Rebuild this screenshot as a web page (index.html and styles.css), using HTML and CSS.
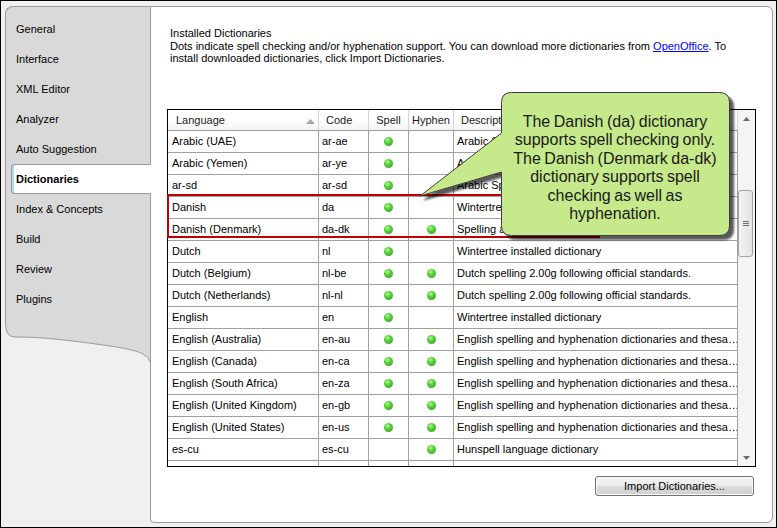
FILE: index.html
```html
<!DOCTYPE html>
<html>
<head>
<meta charset="utf-8">
<link rel="stylesheet" href="styles.css">
</head>
<body>
<div class="window">
  <aside class="sidebar">
    <nav class="nav">
      <div class="item">General</div>
      <div class="item">Interface</div>
      <div class="item">XML Editor</div>
      <div class="item">Analyzer</div>
      <div class="item">Auto Suggestion</div>
      <div class="item active">Dictionaries</div>
      <div class="item">Index &amp; Concepts</div>
      <div class="item">Build</div>
      <div class="item">Review</div>
      <div class="item">Plugins</div>
    </nav>
    <svg class="nav-foot" width="145" height="50" viewBox="0 0 145 50">
      <path d="M0 0 H145 V48 Q144 43 138 40 C133 37.5 125 35 105 32 C60 25.5 35 23 10 23 Q0.5 23 0.5 10 Z" fill="#d9d9d9"/>
      <path d="M0.5 0 V10 Q0.5 23 10 23 C35 23 60 25.5 105 32 C125 35 133 37.5 138 40 Q144 43 145 48" fill="none" stroke="#9b9b9b" stroke-width="1"/>
    </svg>
  </aside>

  <main class="panel">
    <div class="intro">
      <div>Installed Dictionaries</div>
      <div>Dots indicate spell checking and/or hyphenation support. You can download more dictionaries from <a class="link">OpenOffice</a>. To<br>install downloaded dictionaries, click Import Dictionaries.</div>
    </div>

    <div class="table">
      <div class="list">
        <div class="row head">
          <div class="cell c1 hl">Language<svg class="sort" width="9" height="5" viewBox="0 0 9 5"><path d="M0 5 L4.5 0 L9 5 Z" fill="#a6a6a6"/></svg></div>
          <div class="cell c2 hl">Code</div>
          <div class="cell c3 hc">Spell</div>
          <div class="cell c4 hc">Hyphen</div>
          <div class="cell c5 hl">Description</div>
        </div>
        <div class="row"><div class="cell c1">Arabic (UAE)</div><div class="cell c2">ar-ae</div><div class="cell c3 dotcell"><span class="dot"></span></div><div class="cell c4 dotcell"></div><div class="cell c5">Arabic Spelling dictionary</div></div>
        <div class="row"><div class="cell c1">Arabic (Yemen)</div><div class="cell c2">ar-ye</div><div class="cell c3 dotcell"><span class="dot"></span></div><div class="cell c4 dotcell"></div><div class="cell c5">Arabic Spelling dictionary</div></div>
        <div class="row"><div class="cell c1">ar-sd</div><div class="cell c2">ar-sd</div><div class="cell c3 dotcell"><span class="dot"></span></div><div class="cell c4 dotcell"></div><div class="cell c5">Arabic Spelling dictionary</div></div>
        <div class="row"><div class="cell c1">Danish</div><div class="cell c2">da</div><div class="cell c3 dotcell"><span class="dot"></span></div><div class="cell c4 dotcell"></div><div class="cell c5">Wintertree installed dictionary</div></div>
        <div class="row"><div class="cell c1">Danish (Denmark)</div><div class="cell c2">da-dk</div><div class="cell c3 dotcell"><span class="dot"></span></div><div class="cell c4 dotcell"><span class="dot"></span></div><div class="cell c5">Spelling and hyphenation dictionaries</div></div>
        <div class="row"><div class="cell c1">Dutch</div><div class="cell c2">nl</div><div class="cell c3 dotcell"><span class="dot"></span></div><div class="cell c4 dotcell"></div><div class="cell c5">Wintertree installed dictionary</div></div>
        <div class="row"><div class="cell c1">Dutch (Belgium)</div><div class="cell c2">nl-be</div><div class="cell c3 dotcell"><span class="dot"></span></div><div class="cell c4 dotcell"><span class="dot"></span></div><div class="cell c5">Dutch spelling 2.00g following official standards.</div></div>
        <div class="row"><div class="cell c1">Dutch (Netherlands)</div><div class="cell c2">nl-nl</div><div class="cell c3 dotcell"><span class="dot"></span></div><div class="cell c4 dotcell"><span class="dot"></span></div><div class="cell c5">Dutch spelling 2.00g following official standards.</div></div>
        <div class="row"><div class="cell c1">English</div><div class="cell c2">en</div><div class="cell c3 dotcell"><span class="dot"></span></div><div class="cell c4 dotcell"></div><div class="cell c5">Wintertree installed dictionary</div></div>
        <div class="row"><div class="cell c1">English (Australia)</div><div class="cell c2">en-au</div><div class="cell c3 dotcell"><span class="dot"></span></div><div class="cell c4 dotcell"><span class="dot"></span></div><div class="cell c5">English spelling and hyphenation dictionaries and thesa…</div></div>
        <div class="row"><div class="cell c1">English (Canada)</div><div class="cell c2">en-ca</div><div class="cell c3 dotcell"><span class="dot"></span></div><div class="cell c4 dotcell"><span class="dot"></span></div><div class="cell c5">English spelling and hyphenation dictionaries and thesa…</div></div>
        <div class="row"><div class="cell c1">English (South Africa)</div><div class="cell c2">en-za</div><div class="cell c3 dotcell"><span class="dot"></span></div><div class="cell c4 dotcell"><span class="dot"></span></div><div class="cell c5">English spelling and hyphenation dictionaries and thesa…</div></div>
        <div class="row"><div class="cell c1">English (United Kingdom)</div><div class="cell c2">en-gb</div><div class="cell c3 dotcell"><span class="dot"></span></div><div class="cell c4 dotcell"><span class="dot"></span></div><div class="cell c5">English spelling and hyphenation dictionaries and thesa…</div></div>
        <div class="row"><div class="cell c1">English (United States)</div><div class="cell c2">en-us</div><div class="cell c3 dotcell"><span class="dot"></span></div><div class="cell c4 dotcell"><span class="dot"></span></div><div class="cell c5">English spelling and hyphenation dictionaries and thesa…</div></div>
        <div class="row"><div class="cell c1">es-cu</div><div class="cell c2">es-cu</div><div class="cell c3 dotcell"></div><div class="cell c4 dotcell"><span class="dot"></span></div><div class="cell c5">Hunspell language dictionary</div></div>
        <div class="row"><div class="cell c1"></div><div class="cell c2"></div><div class="cell c3"></div><div class="cell c4"></div><div class="cell c5"></div></div>
      </div>
      <div class="scrollbar">
        <div class="arrow"><svg width="7" height="4" viewBox="0 0 7 4"><path d="M0 4 L3.5 0 L7 4 Z" fill="#6a6a6a"/></svg></div>
        <div class="track">
          <div class="thumb"><span></span><span></span><span></span></div>
        </div>
        <div class="arrow"><svg width="7" height="4" viewBox="0 0 7 4"><path d="M0 0 L3.5 4 L7 0 Z" fill="#6a6a6a"/></svg></div>
      </div>
    </div>

    <div class="actions">
      <button class="btn">Import Dictionaries...</button>
    </div>
  </main>

  <div class="highlight"></div>

  <div class="callout">
    <svg class="callout-shape" width="335" height="165" viewBox="0 0 335 165">
      <defs>
        <filter id="sh" x="-10%" y="-10%" width="130%" height="130%">
          <feDropShadow dx="4" dy="4" stdDeviation="1" flood-color="#000" flood-opacity="0.65"/>
        </filter>
      </defs>
      <path d="M101.5 7.5 H309.5 Q319.5 7.5 319.5 17.5 V140.5 Q319.5 150.5 309.5 150.5 H101.5 Q91.5 150.5 91.5 140.5 V87 L10 111 L91.5 48 V17.5 Q91.5 7.5 101.5 7.5 Z" fill="#c5e98b" stroke="#3d3d3d" stroke-width="1" filter="url(#sh)"/>
    </svg>
    <div class="callout-text">The Danish (da) dictionary supports spell checking only. The Danish (Denmark da-dk) dictionary supports spell checking as well as hyphenation.</div>
  </div>
</div>
</body>
</html>
```

FILE: styles.css
```css
* { box-sizing: border-box; }
html, body { margin: 0; padding: 0; }
body {
  width: 777px;
  height: 528px;
  overflow: hidden;
  font-family: "Liberation Sans", Arial, sans-serif;
  font-size: 11px;
  color: #000;
  background: #f0f0f0;
}
.window {
  position: relative;
  width: 777px;
  height: 528px;
  border: 1px solid #000;
  background: #f0f0f0;
  padding: 5px 3px 4px 4px;
  display: flex;
  align-items: flex-start;
}

/* sidebar */
.sidebar { width: 145px; flex: none; display: flex; flex-direction: column; }
.nav {
  background: #d9d9d9;
  border-left: 1px solid #9b9b9b;
  border-top: 1px solid #9b9b9b;
  border-top-left-radius: 8px;
  padding-top: 7px;
}
.item { height: 30px; line-height: 30px; padding-left: 10px; white-space: nowrap; }
.item.active {
  position: relative;
  z-index: 2;
  margin-left: 5px;
  margin-right: -1px;
  background: #fff;
  border: 1px solid #9b9b9b;
  border-right: none;
  border-radius: 3px 0 0 3px;
  box-shadow: inset 2px 0 0 #acd9f8;
  padding-left: 4px;
  line-height: 28px;
  font-weight: bold;
}
.nav-foot { display: block; }

/* panel */
.panel {
  flex: 1;
  height: 517px;
  background: #fff;
  border: 1px solid #9b9b9b;
  border-radius: 0 6px 6px 4px;
  padding: 20px 0 0 16px;
}
.intro { height: 38px; line-height: 12.5px; padding-left: 3px; white-space: nowrap; }
.link { color: #0000ff; text-decoration: underline; }

.table {
  margin-top: 44px;
  width: 589px;
  height: 358px;
  border: 1px solid #000;
  display: flex;
  background: #fff;
}
.list { width: 570px; overflow: hidden; flex: none; }
.row { display: flex; height: 22px; border-bottom: 1px solid #a0a0a0; }
.cell {
  border-right: 1px solid #a0a0a0;
  line-height: 21px;
  padding: 0 3px;
  white-space: nowrap;
  overflow: hidden;
  flex: none;
}
.c1 { width: 151px; padding-left: 4px; }
.c2 { width: 50px; }
.c3 { width: 40px; }
.c4 { width: 45px; }
.c5 { width: 284px; }
.dotcell { display: flex; align-items: center; justify-content: center; padding: 0; }
.dot {
  width: 9px;
  height: 9px;
  border-radius: 50%;
  background: radial-gradient(circle at 40% 32%, #b4f59a 0, #52cf34 40%, #2d9a1c 100%);
}

.row.head {
  height: 21px;
  background: linear-gradient(#ffffff 0%, #ffffff 55%, #f1f2f4 100%);
  border-bottom: 1px solid #a0a0a0;
}
.row.head .cell { line-height: 20px; border-right-color: #d5d5d5; color: #1a1a1a; }
.hl { padding-left: 7px; }
.c1.hl { padding-left: 8px; position: relative; }
.hc { text-align: center; padding: 0; }
.sort { position: absolute; left: 138px; top: 9px; }

.scrollbar {
  width: 17px;
  flex: none;
  display: flex;
  flex-direction: column;
  background: #f4f4f4;
}
.arrow { height: 17px; display: flex; align-items: center; justify-content: center; flex: none; }
.track { flex: 1; }
.thumb {
  margin-top: 63px;
  width: 15px;
  height: 67px;
  border: 1px solid #a3a3a3;
  border-radius: 3px;
  background: linear-gradient(90deg, #f3f3f3, #e4e4e4);
  display: flex;
  flex-direction: column;
  align-items: center;
  justify-content: center;
  gap: 1px;
}
.thumb span { width: 6px; height: 1px; background: #6e6e6e; }

.actions { width: 589px; margin-top: 9px; padding-right: 2px; display: flex; justify-content: flex-end; }
.btn {
  width: 159px;
  height: 20px;
  font-family: "Liberation Sans", Arial, sans-serif;
  font-size: 11px;
  color: #000;
  border: 1px solid #707070;
  border-radius: 3px;
  background: linear-gradient(#f3f3f3 0%, #ebebeb 50%, #dddddd 51%, #d0d0d0 100%);
  box-shadow: inset 0 0 0 1px #fbfbfb;
  padding: 0;
}

/* overlays */
.highlight {
  position: absolute;
  left: 166px;
  top: 193px;
  width: 433px;
  height: 44px;
  border: 2px solid #c00000;
  z-index: 3;
}
.callout {
  position: absolute;
  left: 409px;
  top: 84px;
  width: 335px;
  height: 165px;
  z-index: 4;
}
.callout-shape { position: absolute; left: 0; top: 0; }
.callout-text {
  position: absolute;
  left: 93px;
  top: 28px;
  width: 224px;
  text-align: center;
  font-family: "Liberation Sans", Arial, sans-serif;
  font-size: 16px;
  line-height: 18.4px;
  color: #1a1a1a;
  word-spacing: -1px;
}
```
